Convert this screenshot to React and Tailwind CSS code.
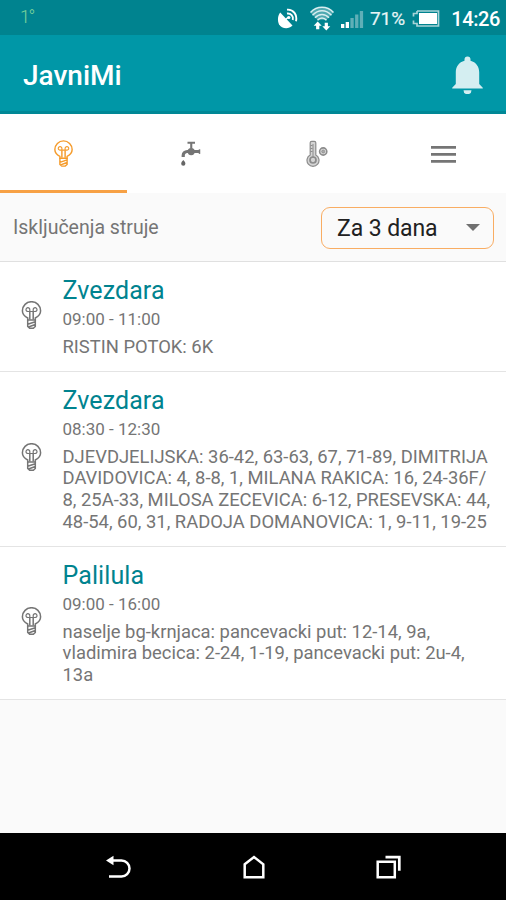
import React from 'react';

const outages = [
    { id: 1, area: 'Zvezdara', time: '09:00 - 11:00', lines: ['RISTIN POTOK: 6K'] },
    {
        id: 2,
        area: 'Zvezdara',
        time: '08:30 - 12:30',
        lines: [
            'DJEVDJELIJSKA: 36-42, 63-63, 67, 71-89, DIMITRIJA',
            'DAVIDOVICA: 4, 8-8, 1, MILANA RAKICA: 16, 24-36F/',
            '8, 25A-33, MILOSA ZECEVICA: 6-12, PRESEVSKA: 44,',
            '48-54, 60, 31, RADOJA DOMANOVICA: 1, 9-11, 19-25',
        ],
    },
    {
        id: 3,
        area: 'Palilula',
        time: '09:00 - 16:00',
        lines: [
            'naselje bg-krnjaca: pancevacki put: 12-14, 9a,',
            'vladimira becica: 2-24, 1-19, pancevacki put: 2u-4,',
            '13a',
        ],
    },
];

const BulbIcon = ({ className }) => (
    <svg viewBox="0 0 20 28" fill="none" stroke="currentColor" strokeWidth="1.5" className={className}>
        <path d="M6.2 19v-2C3 15.400 .9 13.200 .9 9.800a9.100 9.100 0 0 1 18.200 0c0 3.400-2.100 5.600-5.300 7.200v2z" />
        <path d="M8.300 18.500V10.500M11.700 18.500V10.500" />
        <path d="M8.300 10.500H6.500a1.900 1.900 0 1 1 1.800-1.900zM11.700 10.500h1.800a1.900 1.900 0 1 0-1.800-1.900zM8.300 10.500h3.400" strokeWidth="1.200" />
        <path d="M6.200 19v6.500l2 1.800h3.600l2-1.800V19M6.200 23.300l7.600-2.600M7 26l6.800-2.500" />
    </svg>
);

const TapIcon = () => (
    <svg viewBox="0 0 20 26" className="w-5 h-[26px]">
        <path d="M6.500 .8h7.500v1.900h-2.700v4.800H9.200V2.700H6.500z" fill="#757575" />
        <path d="M2.200 16v-1.500a4 4 0 0 1 4-4H18" fill="none" stroke="#757575" strokeWidth="3.200" />
        <circle cx="10.200" cy="10.600" r="3.600" fill="#757575" />
        <path d="M18.500 8.300v4.600" stroke="#757575" strokeWidth="1.500" />
        <path d="M2.300 19c1.200 1.300 2.100 2.400 2.100 3.700a2.100 2.100 0 0 1-4.200 0c0-1.300.9-2.400 2.100-3.700z" fill="#666" />
    </svg>
);

const ThermometerIcon = () => (
    <svg viewBox="0 0 22 27" fill="none" stroke="#8c8c8c" className="w-[22px] h-[27px]">
        <path d="M4.200 15V2.800a1.500 1.500 0 0 1 1.500-1.500h2.600a1.500 1.500 0 0 1 1.500 1.500V15a6 6 0 1 1-5.600 0z" fill="#d4d4d4" strokeWidth="1.200" />
        <path d="M7 4v14M4.500 5.500h2M4.500 8.500h2M4.500 11.500h2" strokeWidth="1" />
        <circle cx="7" cy="20" r="3" strokeWidth="1.700" />
        <circle cx="17.200" cy="11.500" r="3.600" strokeWidth="1.600" fill="#ddd" />
        <circle cx="17.200" cy="11.500" r="1.500" fill="#aaa" strokeWidth=".8" />
    </svg>
);

const StatusBar = () => (
    <div className="h-[35px] bg-[#00838f] flex items-center justify-between pl-[20px] pr-[6px] text-white">
        <span className="text-[18px] leading-5 font-light text-[#7dd39a] -mt-[2px] tracking-[-1.5px]">1°</span>
        <div className="flex items-center h-full pt-[3px]">
            <svg viewBox="0 0 22 22" className="w-[22px] h-[22px] mr-[10px]">
                <path d="M3.200 4.500 15.500 17.500C11 22 4.500 20.500 2 16.200.200 12.500.800 7.500 3.200 4.500z" fill="#fff" />
                <path d="m8 12 3.500-3" stroke="#fff" strokeWidth="1.600" />
                <circle cx="11.800" cy="9.500" r="1.600" fill="#fff" />
                <path d="M10 5.500a5.200 5.200 0 0 1 5.800 6.500M10 1.700c6.500-.5 10.500 5 9 11.500" fill="none" stroke="#fff" strokeWidth="1.900" />
            </svg>
            <svg viewBox="0 0 26 26" className="w-[26px] h-[26px] mr-[5px]" fill="none">
                <path d="M1.500 6.500C8 -.5 18 -.5 24.500 6.500L17.500 13.800h-9z" fill="#4fa9b1" />
                <path d="M1.500 6.500C8 -.5 18 -.5 24.500 6.500M3.500 9.200c5.500-6 13.500-6 19 0M6 11.800c4-4.500 10-4.500 14 0M8.500 14.200c2.600-3 6.400-3 9 0" stroke="#d8eef0" strokeWidth="1.500" />
                <path d="m8.700 15.500 4 4.200h-2.400v3.500H7.100v-3.500H4.700zM17.300 24.500l-4-4.200h2.400v-3.500h3.200v3.500h2.400z" fill="#fff" />
            </svg>
            <svg viewBox="0 0 24 18" className="w-6 h-[18px] mr-[6px]">
                <path d="M1 14h3.300v4H1zM5.700 12H9v6H5.700z" fill="#fff" />
                <path d="M10.400 8h3.300v10h-3.300zM15.100 4.500h3.300V18h-3.300zM19.800 1h3.300v17h-3.300z" fill="#5fafb7" />
            </svg>
            <span className="w-[37px] text-[19px] leading-5 tracking-[-.1px] text-[#e6f5f6] [-webkit-text-stroke:0.2px]">71%</span>
            <svg viewBox="0 0 29 17" className="w-[29px] h-[17px] ml-[4px] mr-[9px] -mt-[2px]">
                <path d="M6 1h21.500v15H6v-2.500H2.500v-3M2.500 6.500v-3H6V1" fill="none" stroke="#a7d3d7" strokeWidth="1.700" />
                <path d="M8 3h18v11H8z" fill="#fff" />
            </svg>
            <span className="w-[51px] text-[20px] leading-5 tracking-[-.4px] font-medium text-right">14:26</span>
        </div>
    </div>
);

const Header = () => (
    <header className="h-[79px] bg-[#0097a7] flex items-center justify-between pl-[23px] pr-[23px] pt-[3px] border-b-[3px] border-[#008896]">
        <h1 className="text-[28px] leading-8 font-medium text-white pt-[3px]">JavniMi</h1>
        <svg viewBox="0 0 31 38" className="w-[31px] h-[38px]" fill="#d4eef1">
            <path d="M15.500.500a3 3 0 0 1 3 3v1.300c5.500 1.400 8.700 5.800 8.700 11.500V28l3.600 3.700v.8H.200v-.8L3.800 28V16.300C3.800 10.600 7 6.200 12.500 4.800V3.500a3 3 0 0 1 3-3z" />
            <path d="M11.500 34.200h8a4 4 0 0 1-8 0z" />
        </svg>
    </header>
);

const Tabs = () => (
    <nav className="h-[79px] bg-white grid grid-cols-4">
        <button className="flex items-center justify-center border-b-[3px] border-[#f7a145] pt-[3px]">
            <BulbIcon className="w-[19px] h-[27px] text-[#f59b2b]" />
        </button>
        <button className="flex items-center justify-center pl-[2px]">
            <TapIcon />
        </button>
        <button className="flex items-center justify-center pl-[2px]">
            <ThermometerIcon />
        </button>
        <button className="flex items-center justify-center pl-[2px] pt-px">
            <svg viewBox="0 0 25 17" className="w-[25px] h-[17px]" fill="#757575">
                <path d="M0 0h25v2.700H0zM0 7h25v2.700H0zM0 14h25v2.700H0z" />
            </svg>
        </button>
    </nav>
);

const OutageRow = ({ outage }) => (
    <li className="bg-white flex items-center pl-[21px] border-b border-[#e4e4e4] pt-[14px] pb-[13px]">
        <BulbIcon className="w-[21px] h-7 shrink-0 text-[#757575] -mt-1" />
        <div className="ml-[20.5px]">
            <h2 className="text-[25px] leading-[30px] tracking-[.1px] text-[#00838f]">{outage.area}</h2>
            <p className="mt-[2px] text-[17px] leading-[22px] text-[#757575]">{outage.time}</p>
            <div className="mt-[6px] text-[18.4px] leading-[21.7px] text-[#757575] whitespace-nowrap">
                {outage.lines.map((line) => (
                    <p key={line}>{line}</p>
                ))}
            </div>
        </div>
    </li>
);

const NavBar = () => (
    <div className="h-[67px] bg-black flex items-center justify-between pl-[106px] pr-[105px]">
        <svg viewBox="0 0 25 24" className="w-[25px] h-6" fill="none">
            <path d="M6 5.500h9.500a8 8 0 0 1 0 16H3" stroke="#fff" strokeWidth="2.500" />
            <path d="M0 5.500 7.500.800v9.400z" fill="#fff" />
        </svg>
        <svg viewBox="0 0 22 24" className="w-[22px] h-6" fill="none">
            <path d="M1.700 9.300 11 2l9.300 7.300v12.900H1.700z" stroke="#fff" strokeWidth="2.500" />
        </svg>
        <svg viewBox="0 0 25 24" className="w-[25px] h-6" fill="none" stroke="#fff">
            <path d="M1.700 6.700h17.100v15.500H1.700z" strokeWidth="2.500" />
            <path d="M9.500 2.200h13.800v13.500" strokeWidth="2.700" />
        </svg>
    </div>
);

const App = () => {
    return (
        <div className="w-[506px] h-[900px] flex flex-col overflow-hidden bg-[#fafafa] font-['Roboto',sans-serif]">
            <StatusBar />
            <Header />
            <Tabs />

            {/* Filter */}
            <div className="h-[69px] flex items-center justify-between pl-[13px] pr-[12px] pt-px border-b border-[#e0e0e0]">
                <span className="text-[19.5px] text-[#757575]">Isključenja struje</span>
                <button className="w-[173px] h-[42px] flex items-center justify-between pl-[15px] pr-[13px] rounded-[9px] border-[1.5px] border-[#f9ad63]">
                    <span className="text-[23px] leading-7 pt-[2px] tracking-[-.1px] text-[#212121]">Za 3 dana</span>
                    <svg viewBox="0 0 14 7" className="w-[14px] h-[7px]" fill="#707070">
                        <path d="M0 0h14L7 7z" />
                    </svg>
                </button>
            </div>

            <ul className="flex-1">
                {outages.map((outage) => (
                    <OutageRow key={outage.id} outage={outage} />
                ))}
            </ul>

            <NavBar />
        </div>
    );
};

export default App;
